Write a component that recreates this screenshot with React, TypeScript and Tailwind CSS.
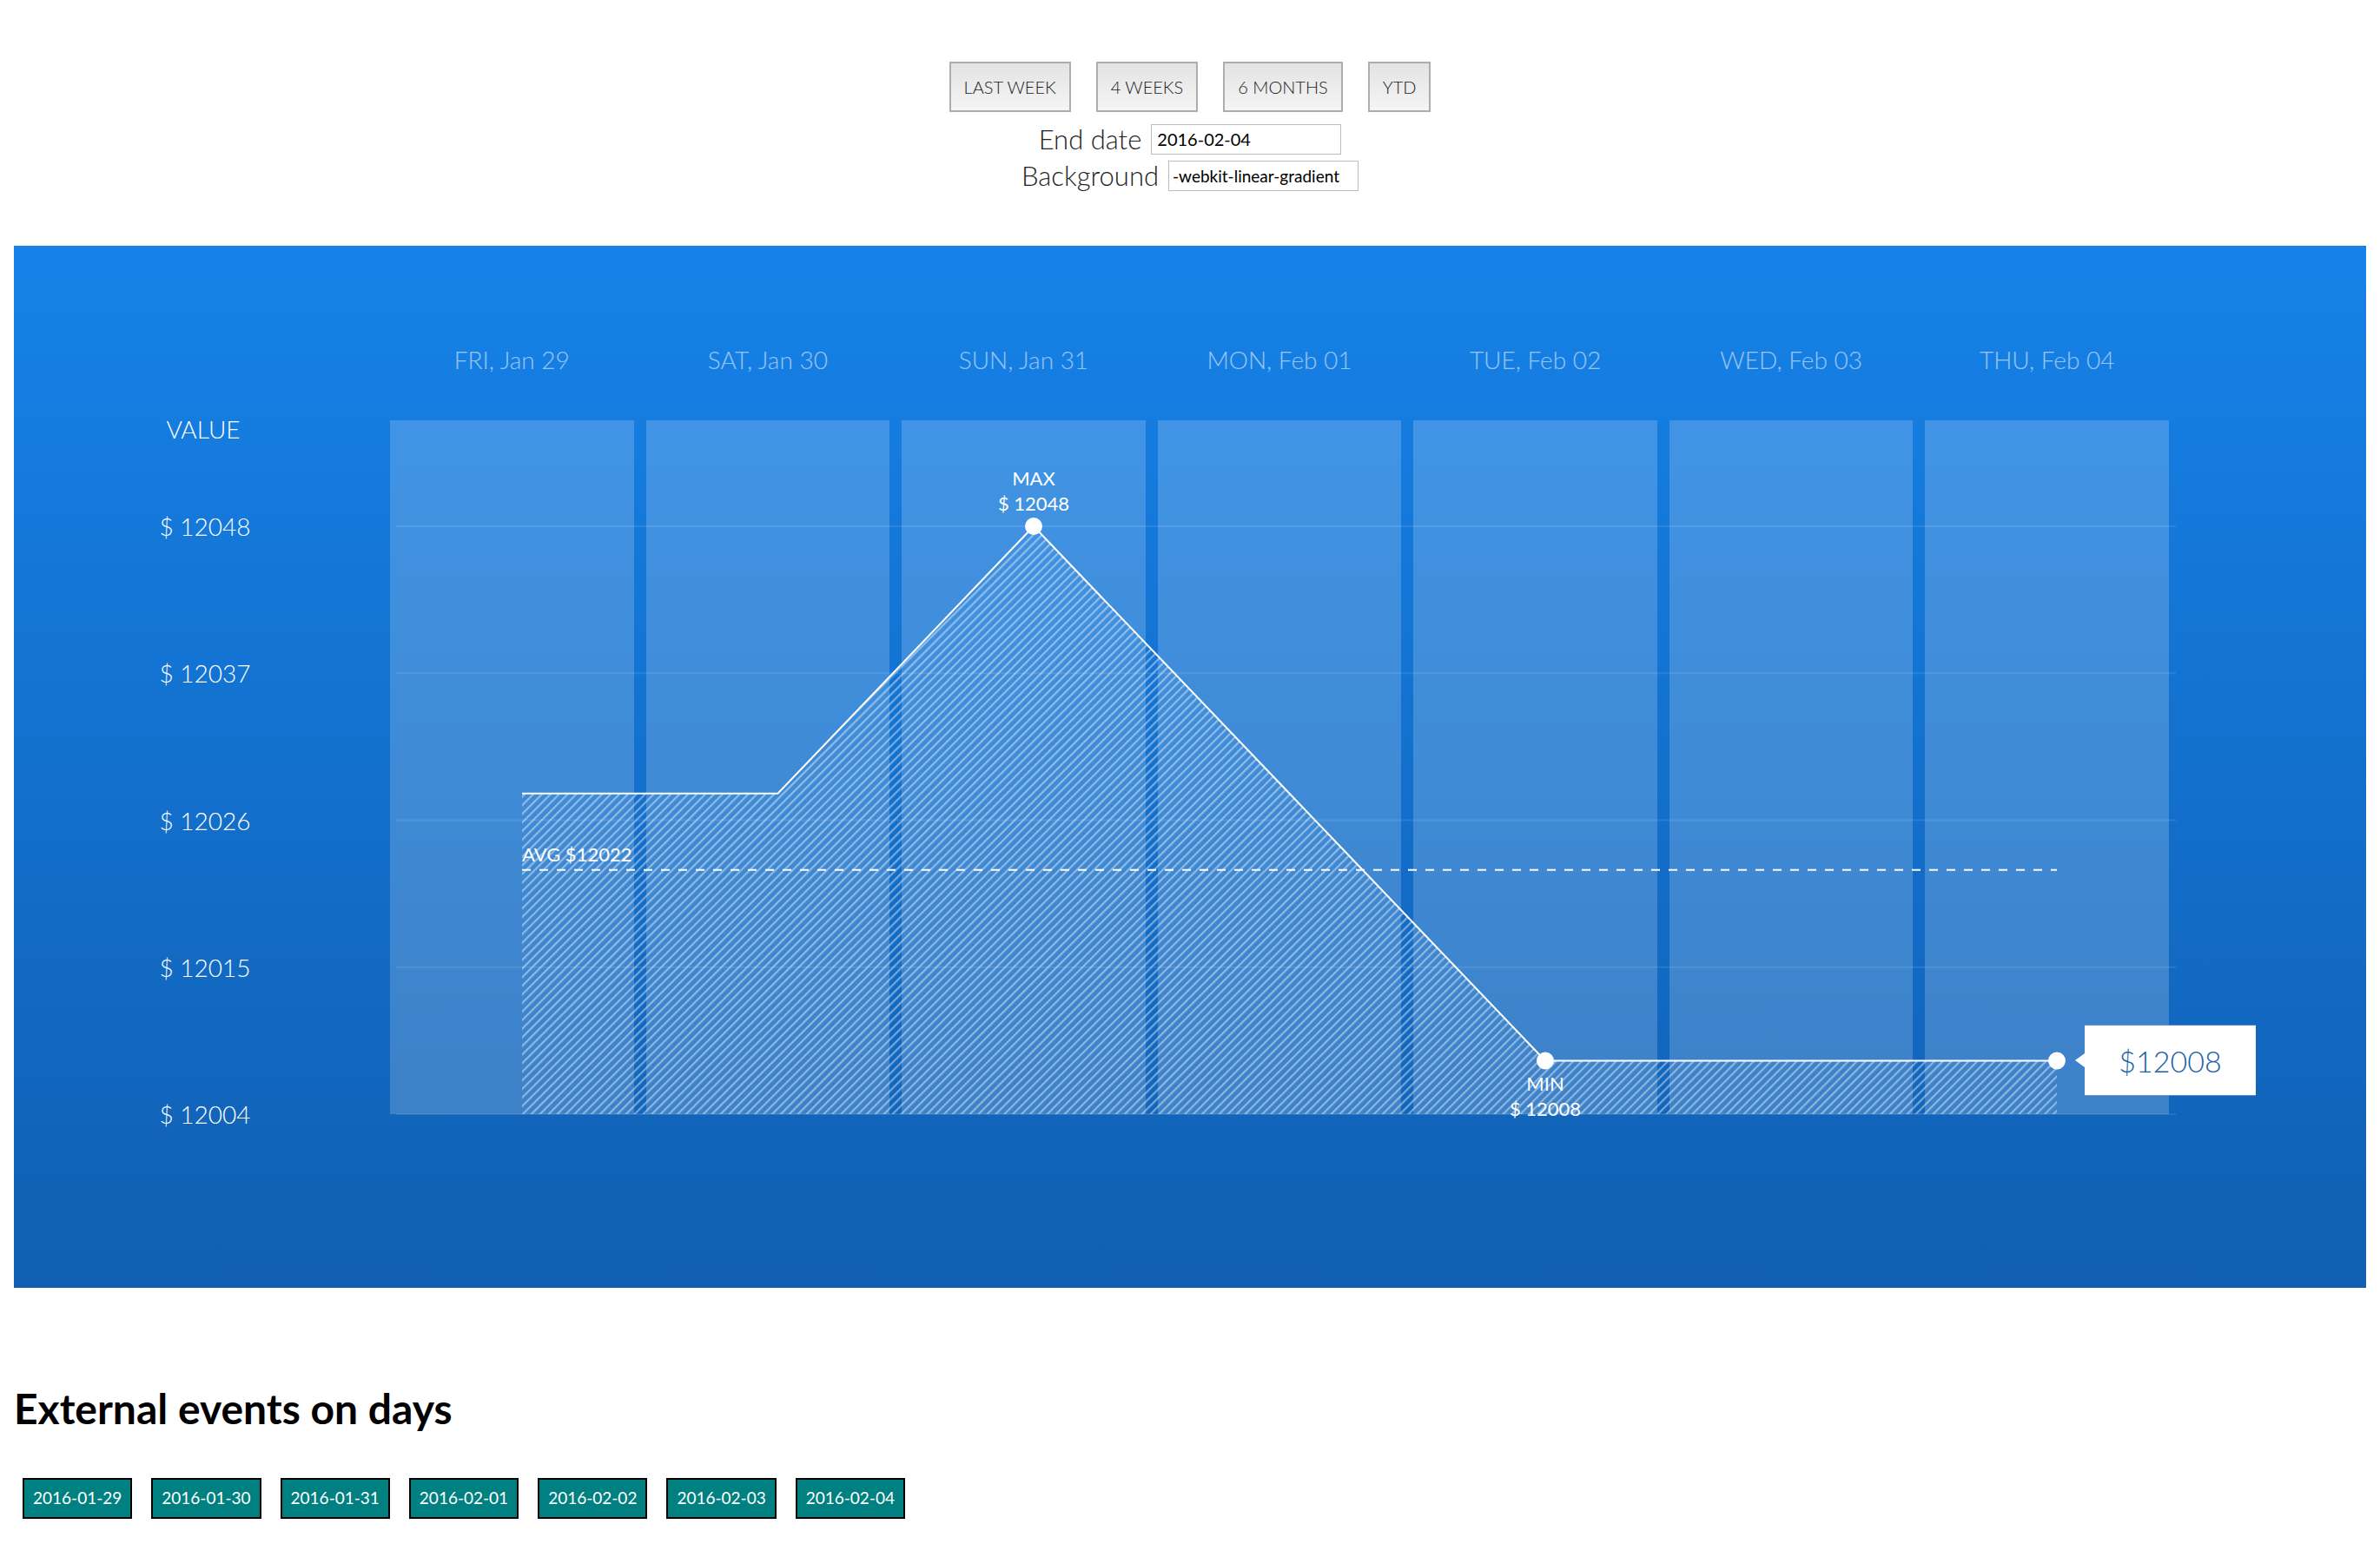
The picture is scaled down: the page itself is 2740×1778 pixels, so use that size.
import React from 'react';

interface Day {
  label: string;
  date: string;
  value: number;
}

const days: Day[] = [
  { label: 'FRI, Jan 29', date: '2016-01-29', value: 12028 },
  { label: 'SAT, Jan 30', date: '2016-01-30', value: 12028 },
  { label: 'SUN, Jan 31', date: '2016-01-31', value: 12048 },
  { label: 'MON, Feb 01', date: '2016-02-01', value: 12028 },
  { label: 'TUE, Feb 02', date: '2016-02-02', value: 12008 },
  { label: 'WED, Feb 03', date: '2016-02-03', value: 12008 },
  { label: 'THU, Feb 04', date: '2016-02-04', value: 12008 },
];

const ranges = ['Last week', '4 weeks', '6 months', 'YTD'];
const ticks = [12048, 12037, 12026, 12015, 12004];

const CHART_W = 2048;
const CHART_H = 799;
const yOf = (v: number) => CHART_H - (v - 12004) * (169.25 / 11);
const xOf = (i: number) => 152 + i * 294.5;

const Chart: React.FC = () => {
  const values = days.map((d) => d.value);
  const max = Math.max(...values);
  const min = Math.min(...values);
  const avg = values.reduce((a, b) => a + b, 0) / values.length;
  const maxIdx = values.indexOf(max);
  const minIdx = values.indexOf(min);
  const last = values.length - 1;

  const line = values.map((v, i) => `${xOf(i)},${yOf(v)}`).join(' ');
  const area = `${xOf(0)},${CHART_H} ${line} ${xOf(last)},${CHART_H}`;

  return (
    <div className="relative h-[799px] w-[2048px]">
      {/* day columns */}
      <div className="grid h-full grid-cols-7 gap-x-[14px]">
        {days.map((d) => (
          <div key={d.date} className="bg-white/[0.19]" />
        ))}
      </div>

      <svg
        className="absolute left-0 top-0 overflow-visible"
        width={CHART_W}
        height={CHART_H}
        viewBox={`0 0 ${CHART_W} ${CHART_H}`}
      >
        <defs>
          <pattern id="hatch" width="7" height="7" patternUnits="userSpaceOnUse" patternTransform="rotate(45)">
            <rect x="0" y="0" width="2.2" height="7" fill="rgba(255,255,255,0.42)" />
          </pattern>
        </defs>
        {ticks.map((t) => (
          <line key={t} x1={7} x2={2056} y1={yOf(t)} y2={yOf(t)} stroke="rgba(255,255,255,0.1)" strokeWidth={2} />
        ))}
        <polygon points={area} fill="url(#hatch)" />
        <polyline points={line} fill="none" stroke="#fff" strokeWidth={2} />
        <line
          x1={xOf(0)}
          x2={xOf(last)}
          y1={yOf(avg)}
          y2={yOf(avg)}
          stroke="#fff"
          strokeWidth={2}
          strokeDasharray="10 10"
        />
        <circle cx={xOf(maxIdx)} cy={yOf(max)} r={10} fill="#fff" />
        <circle cx={xOf(minIdx)} cy={yOf(min)} r={10} fill="#fff" />
        <circle cx={xOf(last)} cy={yOf(values[last])} r={10} fill="#fff" />
      </svg>

      {/* max label */}
      <div
        className="absolute -translate-x-1/2 -translate-y-full text-center text-[22px] leading-[29px] text-white"
        style={{ left: xOf(maxIdx), top: yOf(max) - 12 }}
      >
        <div>MAX</div>
        <div>$ {max}</div>
      </div>

      {/* min label */}
      <div
        className="absolute -translate-x-1/2 text-center text-[22px] leading-[29px] text-white"
        style={{ left: xOf(minIdx), top: yOf(min) + 12 }}
      >
        <div>MIN</div>
        <div>$ {min}</div>
      </div>

      {/* avg label */}
      <div
        className="absolute whitespace-nowrap text-[22px] leading-[26px] text-white"
        style={{ left: xOf(0), top: yOf(avg) - 31 }}
      >
        AVG ${Math.round(avg)}
      </div>

      {/* current value tooltip */}
      <div
        className="absolute flex h-[80px] w-[197px] -translate-y-1/2 items-center justify-center bg-white text-[34px] font-light text-[#1d5fa8] shadow-[0_1px_0_rgba(120,170,230,0.6),0_-1px_0_rgba(120,170,230,0.6)]"
        style={{ left: xOf(last) + 32, top: yOf(values[last]) }}
      >
        <span className="absolute right-full top-1/2 h-0 w-0 -translate-y-1/2 border-y-[8px] border-r-[11px] border-y-transparent border-r-white" />
        ${values[last]}
      </div>
    </div>
  );
};

export default function App() {
  return (
    <div className="min-h-screen bg-white font-['Lato',sans-serif] text-[#222]">
      <div className="flex flex-col items-center pt-[71px]">
        <div className="flex gap-[29px]">
          {ranges.map((r) => (
            <button
              key={r}
              className="h-[58px] border-2 border-[#adadad] bg-gradient-to-b from-[#e3e3e3] to-[#f5f5f5] px-[15px] text-[20px] font-light uppercase text-[#222]"
            >
              {r}
            </button>
          ))}
        </div>
        <div className="mt-[10px] flex h-[42px] items-center gap-[11px]">
          <span className="text-[31px] font-light">End date</span>
          <input
            readOnly
            value="2016-02-04"
            className="h-[35px] w-[219px] border border-[#bdbdbd] px-[6px] text-[20px] text-black outline-none"
          />
        </div>
        <div className="flex h-[42px] items-center gap-[11px]">
          <span className="text-[31px] font-light">Background</span>
          <input
            readOnly
            value="-webkit-linear-gradient"
            className="h-[35px] w-[219px] border border-[#bdbdbd] px-[4px] text-[19px] text-black outline-none"
          />
        </div>
      </div>

      <div className="mx-4 mt-[60px] h-[1200px] bg-gradient-to-b from-[#1682e9] to-[#105fb2] pt-[113px]">
        <div className="flex">
          <div className="w-[433px] shrink-0" />
          <div className="grid w-[2048px] grid-cols-7 gap-x-[14px]">
            {days.map((d) => (
              <div key={d.date} className="text-center text-[28px] font-light leading-[36px] text-white/55">
                {d.label}
              </div>
            ))}
          </div>
        </div>
        <div className="mt-[52px] flex">
          <div className="relative h-[799px] w-[433px] shrink-0 text-[28px] font-light text-white">
            <div className="absolute left-[218px] top-[10px] -translate-x-1/2 -translate-y-1/2 leading-[36px]">
              VALUE
            </div>
            {ticks.map((t) => (
              <div
                key={t}
                className="absolute left-[220px] -translate-x-1/2 -translate-y-1/2 whitespace-nowrap leading-[36px]"
                style={{ top: yOf(t) }}
              >
                $ {t}
              </div>
            ))}
          </div>
          <Chart />
        </div>
      </div>

      <div className="px-4 pt-[111px]">
        <h2 className="text-[48px] font-bold leading-[56px] text-black">External events on days</h2>
        <div className="ml-[10px] mt-[52px] flex gap-[22px]">
          {days.map((d) => (
            <button
              key={d.date}
              className="h-[47px] border-2 border-black bg-[#008080] px-[10px] text-[19px] text-white"
            >
              {d.date}
            </button>
          ))}
        </div>
      </div>
    </div>
  );
}
